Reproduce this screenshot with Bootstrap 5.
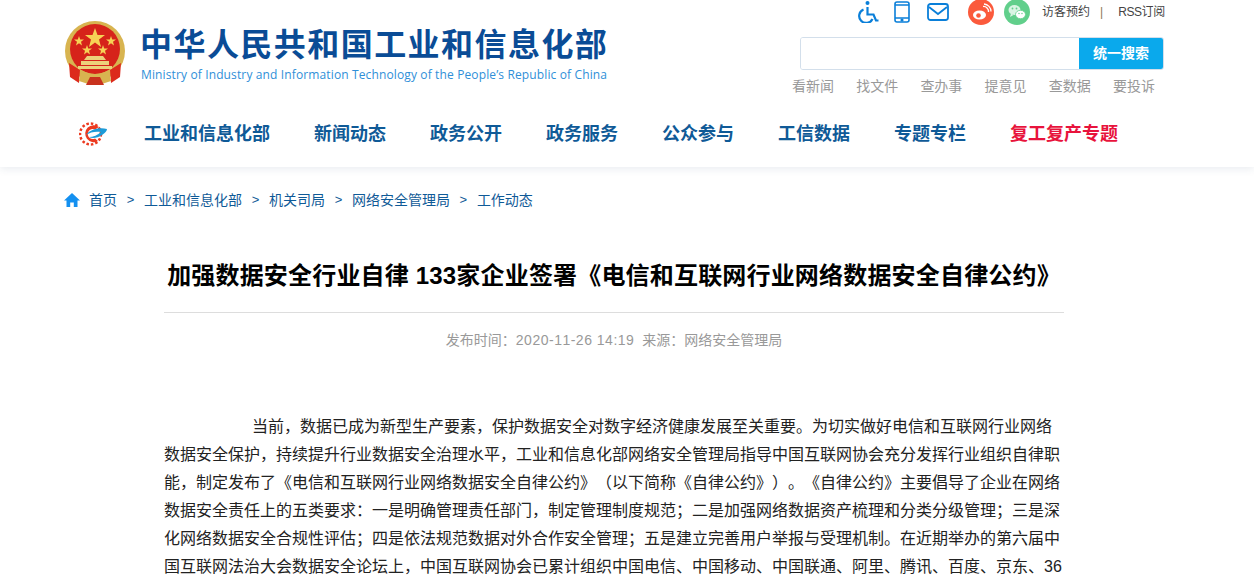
<!DOCTYPE html>
<html lang="zh-CN">
<head>
<meta charset="UTF-8">
<title>加强数据安全行业自律</title>
<link href="https://cdn.jsdelivr.net/npm/bootstrap@5.3.0/dist/css/bootstrap.min.css" rel="stylesheet">
<style>
html, body { height: 577px; overflow: hidden; }
body { background: #fff; font-family: "Liberation Sans", "Noto Sans CJK SC", sans-serif; color: #222; text-spacing-trim: space-all; font-kerning: none; }
.site-head { height: 167px; box-shadow: 0 2px 8px rgba(40, 70, 110, .1); }
.page-wrap { width: 1100px; margin-left: 64px; }
.head-top { height: 101px; }
.emblem { width: 62px; height: 66px; margin-top: 21px; }
.brand { margin-left: 15px; margin-top: 26px; }
.brand-cn { font-size: 32px; line-height: 38px; font-weight: 700; letter-spacing: 1.45px; color: #0a4c96; white-space: nowrap; margin-left: -1px; }
.brand-en { font-family: "Open Sans", sans-serif; font-size: 12px; line-height: 16px; letter-spacing: .13px; color: #2f8fd8; white-space: nowrap; margin-top: 3px; }
.tool-col { width: 364px; }
.tool-row { height: 24px; }
.tool-ic { display: block; flex: none; }
.ic-wheel { margin-left: 58px; }
.ic-phone { margin-left: 14px; }
.ic-mail { margin-left: 17px; }
.ic-weibo { margin-left: 19px; }
.ic-wechat { margin-left: 10px; }
.tool-link { font-size: 12px; color: #444; text-decoration: none; white-space: nowrap; }
.link-visit { margin-left: 12px; }
.link-rss { letter-spacing: -.4px; }
.tool-sep { font-size: 12px; color: #8a7a55; margin: 0 15px 0 10px; }
.search-box { height: 33px; margin-top: 13px; border: 1px solid #d3dfeb; border-radius: 3px; overflow: hidden; }
.search-box input { border: 0; outline: 0; flex: 1; min-width: 0; }
.search-btn { width: 84px; background: #0aa9ec; color: #fff; font-size: 14px; font-weight: 700; border: 0; padding: 0; }
.quick-row { margin: 7px 9px 0 -8px; }
.quick-row a { font-size: 14px; line-height: 18px; color: #999; text-decoration: none; white-space: nowrap; }
.main-nav { height: 66px; padding-left: 15px; }
.nav-mark { width: 28px; height: 28px; margin-right: 37px; flex: none; }
.main-nav a { font-size: 18px; font-weight: 700; color: #0f5a97; text-decoration: none; white-space: nowrap; margin-right: 44px; }
.main-nav a.nav-hot { color: #e8133c; margin-right: 0; }
.crumbs { height: 24px; margin-top: 21px; font-size: 14px; color: #0f5a97; }
.crumbs svg { margin-right: 9px; }
.crumbs a { color: #0f5a97; text-decoration: none; white-space: nowrap; }
.crumbs i { font-style: normal; font-family: "Liberation Sans", sans-serif; font-size: 13px; margin: 0 9.700px; }
.article-box { width: 900px; margin-left: 100px; }
.art-title { font-size: 24px; line-height: 34px; font-weight: 700; letter-spacing: .18px; color: #000; margin: 47px 0 0; padding-bottom: 19px; border-bottom: 1px solid #ddd; text-align: center; white-space: nowrap; }
.art-meta { font-size: 14px; line-height: 20px; color: #999; text-align: center; margin-top: 17px; }
.meta-num { letter-spacing: .5px; }
.art-body { font-size: 16px; line-height: 28px; color: #222; margin-top: 63px; text-indent: 88px; }
</style>
</head>
<body>
<header class="site-head">
  <div class="page-wrap">
    <div class="head-top d-flex">
      <svg class="emblem" viewBox="0 0 62 66">
        <circle cx="31" cy="30" r="30" fill="#d8b450"/>
        <circle cx="31" cy="28" r="25" fill="#d6231a"/>
        <path d="M5 42 L16 49 L15 62 L6 56Z M57 42 L46 49 L47 62 L56 56Z" fill="#dc2a1c"/>
        <path d="M17 49 Q31 57 45 49 L47 60 Q31 67 15 60Z" fill="#d8b450"/>
        <path d="M26 56 H36 L40 64 H22Z" fill="#c8321e"/>
        <path d="M31 7 L33.500 14 L41 14 L35 18.500 L37 26 L31 21.500 L25 26 L27 18.500 L21 14 L28.500 14Z" fill="#f6d255"/>
        <path d="M15 15 L16.200 18.500 L20 18.500 L17 20.800 L18 24.500 L15 22.200 L12 24.500 L13 20.800 L10 18.500 L13.800 18.500Z M47 15 L48.200 18.500 L52 18.500 L49 20.800 L50 24.500 L47 22.200 L44 24.500 L45 20.800 L42 18.500 L45.800 18.500Z M23 24 L24.200 27.500 L28 27.500 L25 29.800 L26 33.500 L23 31.200 L20 33.500 L21 29.800 L18 27.500 L21.800 27.500Z M39 24 L40.200 27.500 L44 27.500 L41 29.800 L42 33.500 L39 31.200 L36 33.500 L37 29.800 L34 27.500 L37.800 27.500Z" fill="#f6d255"/>
        <path d="M20 39 L23 35 H39 L42 39Z M17 40 H45 V44 H17Z M14 45 H48 V48 H14Z" fill="#ecd07a"/>
      </svg>
      <div class="brand">
        <div class="brand-cn">中华人民共和国工业和信息化部</div>
        <div class="brand-en">Ministry of Industry and Information Technology of the People’s Republic of China</div>
      </div>
      <div class="tool-col ms-auto">
        <div class="tool-row d-flex align-items-center">
          <svg class="tool-ic ic-wheel" width="22" height="22" viewBox="0 0 22 22" fill="none" stroke="#0a7fd9" stroke-width="2.200"><circle cx="9.500" cy="2" r="2" fill="#0a7fd9" stroke="none"/><path d="M9.500 6V13.500H15.500L18 19.500H20.500"/><path d="M5.500 8.500A7 7 0 1 0 14.500 18"/></svg>
          <svg class="tool-ic ic-phone" width="16" height="22" viewBox="0 0 16 22" fill="none" stroke="#0a7fd9" stroke-width="1.600"><rect x="1" y="1" width="14" height="20" rx="2"/><path d="M1 4H15M1 17H15"/><circle cx="8" cy="19" r=".8" fill="#0a7fd9"/></svg>
          <svg class="tool-ic ic-mail" width="22" height="18" viewBox="0 0 22 18" fill="none" stroke="#0a7fd9" stroke-width="1.800"><rect x="1" y="1" width="20" height="16" rx="2.500"/><path d="M2 4L11 11L20 4"/></svg>
          <svg class="tool-ic ic-weibo" width="26" height="26" viewBox="0 0 26 26"><circle cx="13" cy="13" r="13" fill="#fb5a3c"/><ellipse cx="11.500" cy="16" rx="6.500" ry="4.500" fill="#fff"/><circle cx="10.500" cy="16.500" r="2.300" fill="#fb5a3c"/><path d="M15 7.500A5 5 0 0 1 20.500 13M16 5A7.500 7.500 0 0 1 23 12.500" fill="none" stroke="#fff" stroke-width="1.300"/></svg>
          <svg class="tool-ic ic-wechat" width="26" height="26" viewBox="0 0 26 26"><circle cx="13" cy="13" r="13" fill="#61cf8b"/><ellipse cx="10.500" cy="11" rx="6" ry="5" fill="#d9f5e3"/><path d="M7 14.500L6 18L9.500 16Z" fill="#d9f5e3"/><ellipse cx="16.500" cy="15.500" rx="5" ry="4.200" fill="#fff" stroke="#61cf8b" stroke-width=".8"/><circle cx="8.500" cy="9.500" r=".9" fill="#61cf8b"/><circle cx="12.500" cy="9.500" r=".9" fill="#61cf8b"/><circle cx="15" cy="14.500" r=".7" fill="#61cf8b"/><circle cx="18" cy="14.500" r=".7" fill="#61cf8b"/></svg>
          <a class="tool-link link-visit" href="#">访客预约</a>
          <span class="tool-sep">|</span>
          <a class="tool-link link-rss" href="#">RSS订阅</a>
        </div>
        <div class="search-box d-flex">
          <input type="text" aria-label="搜索">
          <button class="search-btn" type="button">统一搜索</button>
        </div>
        <div class="quick-row d-flex justify-content-between">
          <a href="#">看新闻</a><a href="#">找文件</a><a href="#">查办事</a><a href="#">提意见</a><a href="#">查数据</a><a href="#">要投诉</a>
        </div>
      </div>
    </div>
    <nav class="main-nav d-flex align-items-center">
      <svg class="nav-mark" viewBox="0 0 28 28">
        <circle cx="11.500" cy="14" r="10.500" fill="none" stroke="#ec3a20" stroke-width="2.500" stroke-dasharray="2.500 2"/>
        <path d="M20 7A8.500 8.500 0 1 0 19 21L16 18.500A5 5 0 1 1 16 9.500Z" fill="#ec3a20"/>
        <path d="M7 15C11 9 21 7 28 9C28 11 26 13 23 15C19 18 13 19 10 17C14 17 19 15 22 12C17 11 11 12 7 15Z" fill="#1d9bd8"/>
      </svg>
      <a href="#">工业和信息化部</a>
      <a href="#">新闻动态</a>
      <a href="#">政务公开</a>
      <a href="#">政务服务</a>
      <a href="#">公众参与</a>
      <a href="#">工信数据</a>
      <a href="#">专题专栏</a>
      <a class="nav-hot" href="#">复工复产专题</a>
    </nav>
  </div>
</header>
<main class="page-wrap">
  <div class="crumbs d-flex align-items-center">
    <svg width="16" height="14" viewBox="0 0 16 14"><path d="M8 0L16 7.500H13.500V14H9.800V9.500H6.200V14H2.500V7.500H0Z" fill="#1490f0"/></svg>
    <a href="#">首页</a><i>&gt;</i><a href="#">工业和信息化部</a><i>&gt;</i><a href="#">机关司局</a><i>&gt;</i><a href="#">网络安全管理局</a><i>&gt;</i><a href="#">工作动态</a>
  </div>
  <article class="article-box">
    <h1 class="art-title">加强数据安全行业自律 133家企业签署《电信和互联网行业网络数据安全自律公约》</h1>
    <div class="art-meta">发布时间：<span class="meta-num">2020-11-26 14:19</span>&nbsp;&nbsp;来源：网络安全管理局</div>
    <p class="art-body">当前，数据已成为新型生产要素，保护数据安全对数字经济健康发展至关重要。为切实做好电信和互联网行业网络数据安全保护，持续提升行业数据安全治理水平，工业和信息化部网络安全管理局指导中国互联网协会充分发挥行业组织自律职能，制定发布了《电信和互联网行业网络数据安全自律公约》（以下简称《自律公约》）。《自律公约》主要倡导了企业在网络数据安全责任上的五类要求：一是明确管理责任部门，制定管理制度规范；二是加强网络数据资产梳理和分类分级管理；三是深化网络数据安全合规性评估；四是依法规范数据对外合作安全管理；五是建立完善用户举报与受理机制。在近期举办的第六届中国互联网法治大会数据安全论坛上，中国互联网协会已累计组织中国电信、中国移动、中国联通、阿里、腾讯、百度、京东、36</p>
  </article>
</main>
<script src="https://cdn.jsdelivr.net/npm/bootstrap@5.3.0/dist/js/bootstrap.bundle.min.js"></script>
</body>
</html>
